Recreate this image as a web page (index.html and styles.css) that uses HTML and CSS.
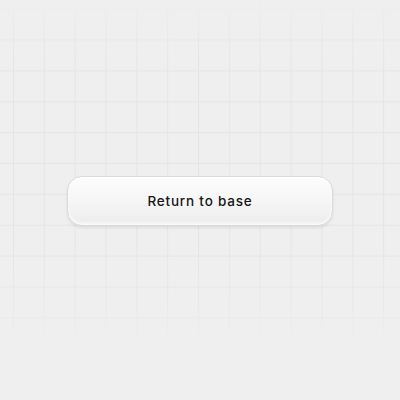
FILE: index.html
```html
<!DOCTYPE html>
<html>
<head>
<meta charset="utf-8">
<link rel="stylesheet" href="styles.css">
</head>
<body>
<div class="stage">
  <div class="grid"></div>
  <button class="btn">Return to base</button>
</div>
</body>
</html>
```
FILE: styles.css
```css
html, body { margin: 0; padding: 0; }
body { background: #efefef; }
.stage {
  position: relative;
  width: 400px;
  height: 400px;
  display: flex;
  align-items: center;
  justify-content: center;
  overflow: hidden;
}
.grid {
  position: absolute;
  inset: 0;
  background-image:
    linear-gradient(to right, #e5e5e5 1px, transparent 1px),
    linear-gradient(to bottom, #e5e5e5 1px, transparent 1px);
  background-size: 30.85px 30.9px;
  background-position: 13px 8.5px;
  -webkit-mask-image: linear-gradient(to bottom, transparent 0px, rgba(0,0,0,0.5) 25px, #000 60px, #000 250px, rgba(0,0,0,0.6) 310px, transparent 340px);
  mask-image: linear-gradient(to bottom, transparent 0px, rgba(0,0,0,0.5) 25px, #000 60px, #000 250px, rgba(0,0,0,0.6) 310px, transparent 340px);
}
.btn {
  position: relative;
  width: 266px;
  height: 50px;
  margin-top: 1px;
  border-radius: 15px;
  border: 1px solid #dadada;
  background: linear-gradient(to bottom, #fdfdfd 0%, #f6f6f6 50%, #ececec 100%);
  box-shadow: inset 0 1px 0 #ffffff, inset 0 -2px 3px rgba(255,255,255,0.8), 0 2px 3px rgba(0,0,0,0.08);
  font-family: Inter, "Liberation Sans", sans-serif;
  font-size: 13.5px;
  font-weight: 500;
  letter-spacing: 0.8px;
  color: #151515;
  padding: 0;
  cursor: pointer;
}
```
